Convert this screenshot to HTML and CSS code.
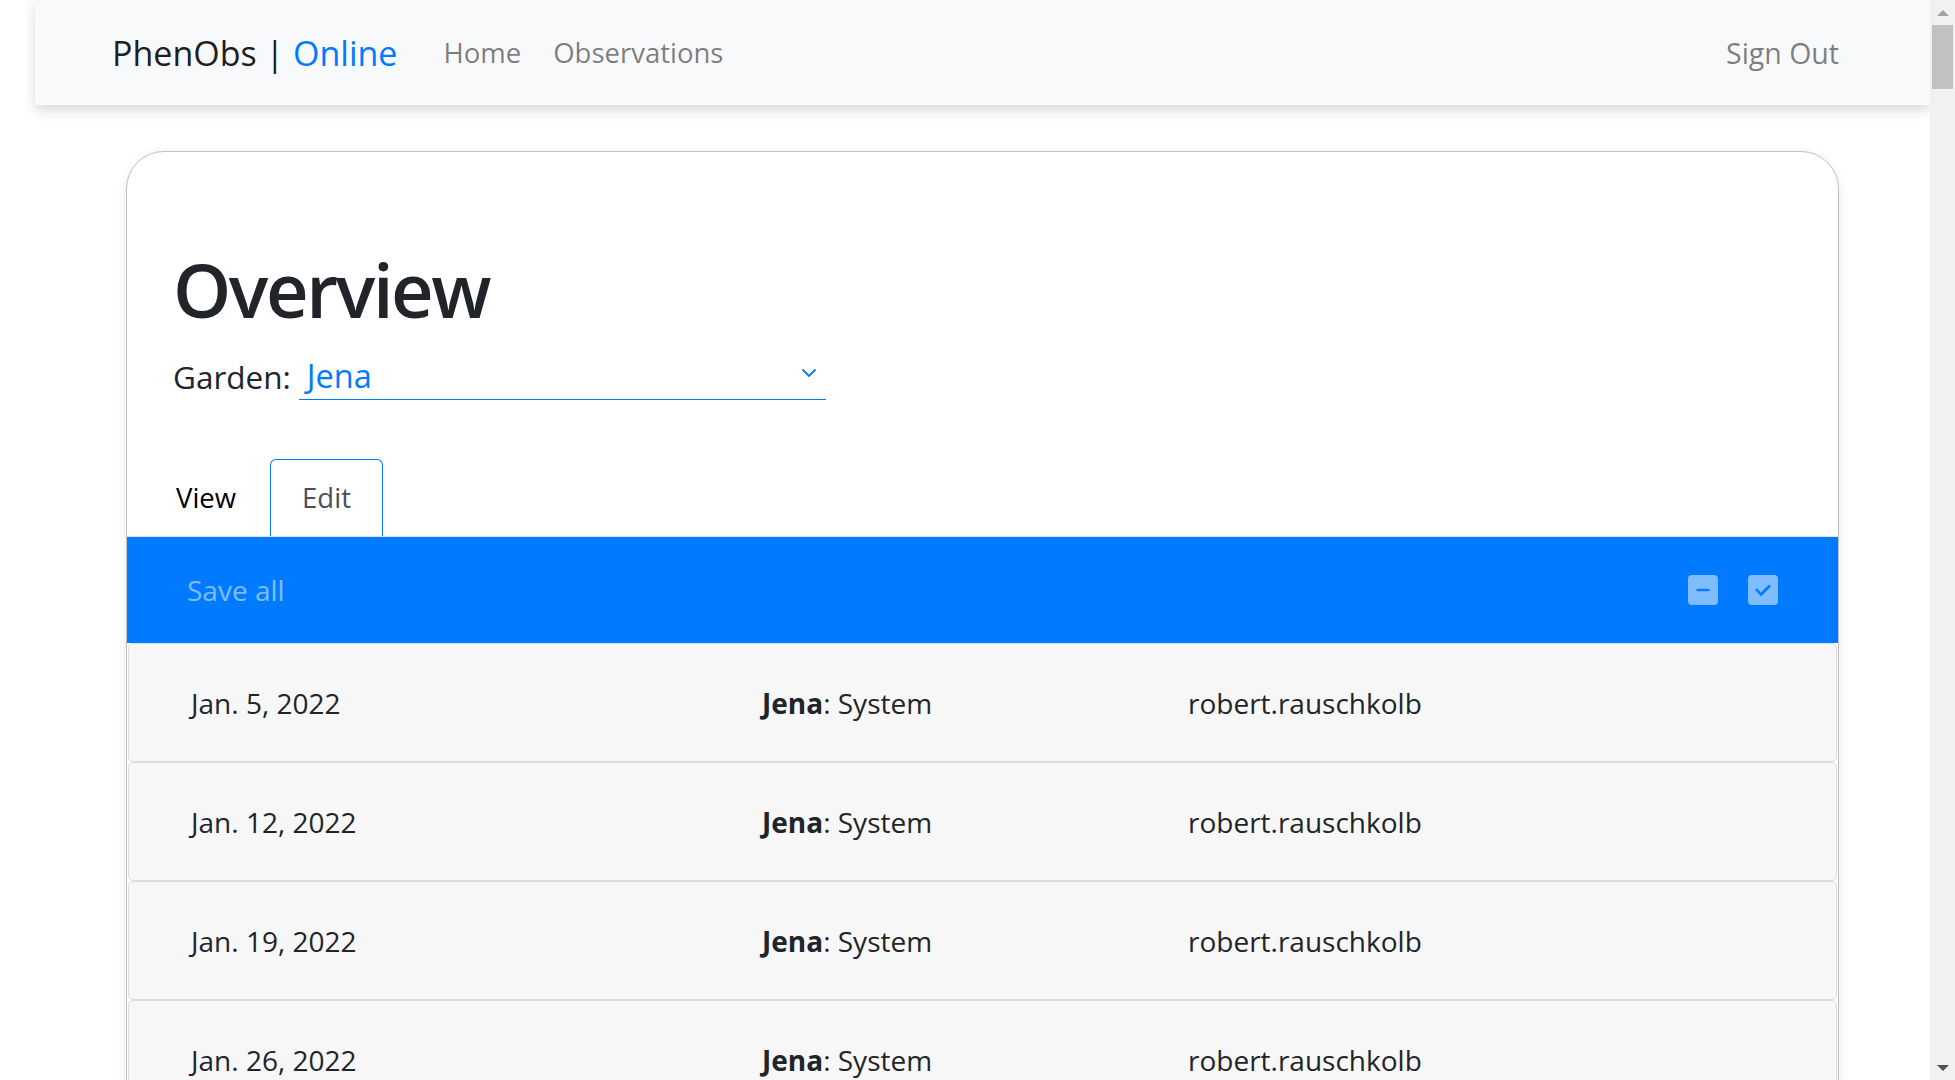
FILE: index.html
```html
<!DOCTYPE html>
<html lang="en">
<head>
<meta charset="utf-8">
<title>PhenObs | Online</title>
<link rel="stylesheet" href="styles.css">
</head>
<body>
<div class="viewport">
  <div class="page">
    <nav class="navbar">
      <a class="brand">PhenObs | <span class="brand-accent">Online</span></a>
      <a class="nav-link">Home</a>
      <a class="nav-link">Observations</a>
      <span class="nav-spacer"></span>
      <a class="nav-link nav-signout">Sign Out</a>
    </nav>
    <main class="main">
      <section class="card">
        <div class="card-head">
          <h1 class="title">Overview</h1>
          <div class="garden">
            <span class="garden-label">Garden:</span>
            <div class="select">
              <span class="select-value">Jena</span>
              <svg class="chevron" width="16" height="10" viewBox="0 0 16 10"><polyline points="1.5,1.5 8,8 14.5,1.5" fill="none" stroke="#007bff" stroke-width="1.8"/></svg>
            </div>
          </div>
        </div>
        <ul class="tabs">
          <li class="tab">View</li>
          <li class="tab tab-active">Edit</li>
        </ul>
        <div class="toolbar">
          <span class="save-all">Save all</span>
          <div class="tool-icons">
            <span class="tool-box">
              <svg width="30" height="30" viewBox="0 0 30 30"><line x1="8.5" y1="15" x2="21.5" y2="15" stroke="#007bff" stroke-width="2.4"/></svg>
            </span>
            <span class="tool-box">
              <svg width="30" height="30" viewBox="0 0 30 30"><polyline points="8,14 13,19.5 22,10.5" fill="none" stroke="#007bff" stroke-width="2.6"/></svg>
            </span>
          </div>
        </div>
        <div class="rows">
          <div class="row"><span>Jan. 5, 2022</span><span><b>Jena</b>: System</span><span>robert.rauschkolb</span></div>
          <div class="row"><span>Jan. 12, 2022</span><span><b>Jena</b>: System</span><span>robert.rauschkolb</span></div>
          <div class="row"><span>Jan. 19, 2022</span><span><b>Jena</b>: System</span><span>robert.rauschkolb</span></div>
          <div class="row"><span>Jan. 26, 2022</span><span><b>Jena</b>: System</span><span>robert.rauschkolb</span></div>
        </div>
      </section>
    </main>
  </div>
  <div class="scrollbar">
    <div class="sb-btn"><span class="sb-up"></span></div>
    <div class="sb-thumb"></div>
    <div class="sb-track"></div>
    <div class="sb-btn"><span class="sb-down"></span></div>
  </div>
</div>
</body>
</html>
```
FILE: styles.css
```css
* { box-sizing: border-box; }
html, body { margin: 0; padding: 0; height: 100%; overflow: hidden; background: #fff; }
body { font-family: "Open Sans", "Noto Sans", sans-serif; color: #212529; font-size: 28px; }

.viewport { display: flex; height: 100vh; }
.page { flex: 1; padding-left: 35px; display: flex; flex-direction: column; overflow: hidden; }

.navbar {
  position: relative; z-index: 2;
  height: 105px; flex: none;
  background: #f8f9fa;
  display: flex; align-items: center;
  padding: 0 75px 0 77px;
  box-shadow: 0 5px 12px rgba(0,0,0,0.16);
}
.brand { font-size: 34px; color: rgba(0,0,0,0.9); margin-right: 30px; white-space: nowrap; }
.brand-accent { color: #007bff; }
.nav-link { font-size: 27.5px; color: rgba(0,0,0,0.5); padding: 0 16px; }
.nav-signout { font-size: 28.5px; }
.nav-spacer { flex: 1; }

.main { flex: 1; padding: 46px 91px 0; }

.card {
  border: 1px solid #c2c2c2;
  border-radius: 38px 38px 0 0;
  box-shadow: 0 2px 10px rgba(0,0,0,0.10);
  background: #fff;
  min-height: 1000px;
}
.card-head { padding: 92px 0 0 46px; }
.title { margin: 0; font-size: 74px; line-height: 91px; font-weight: 600; letter-spacing: -2.4px; color: #212529; }
.garden { margin-top: 17px; display: flex; align-items: flex-end; font-size: 31.5px; }
.garden-label { line-height: 47px; margin-right: 8px; color: #212529; }
.select {
  width: 527px; height: 48px;
  border-bottom: 1px solid #007bff;
  display: flex; align-items: center; justify-content: space-between;
  padding: 0 9px 0 8px;
}
.select-value { color: #007bff; line-height: 47px; font-size: 32.5px; }
.chevron { margin-top: -6px; }

.tabs {
  list-style: none; margin: 59px 0 0; padding: 0 0 0 15px;
  display: flex; border-bottom: 1px solid #dee2e6;
  font-size: 27.5px;
}
.tab {
  padding: 17px 31px 18px; line-height: 41px;
  border: 1px solid transparent; border-bottom: 0;
  border-radius: 6px 6px 0 0;
  color: #000;
}
.tab:first-child { padding-left: 33px; padding-right: 33px; }
.tab-active { border-color: #007bff; color: #495057; }

.toolbar {
  height: 106px; background: #007bff;
  display: flex; align-items: center; justify-content: space-between;
  padding: 0 60px;
}
.save-all { color: rgba(255,255,255,0.5); }
.tool-icons { display: flex; gap: 30px; }
.tool-box { width: 30px; height: 30px; border-radius: 4px; background: rgba(255,255,255,0.5); display: block; }
.tool-box svg { display: block; }

.row {
  height: 119px; margin: 0 1px;
  border: 1px solid #dcdcdc; border-radius: 5px;
  background: #f7f7f7;
  display: grid; grid-template-columns: 571px 426px 1fr; align-items: center;
  padding-left: 62px;
  color: #212529;
}
.row b { font-weight: 700; }

.scrollbar { width: 25px; flex: none; background: #f1f1f1; display: flex; flex-direction: column; }
.sb-btn { height: 25px; display: flex; align-items: center; justify-content: center; flex: none; }
.sb-up { width: 0; height: 0; border-left: 6px solid transparent; border-right: 6px solid transparent; border-bottom: 6px solid #a3a3a3; }
.sb-down { width: 0; height: 0; border-left: 6px solid transparent; border-right: 6px solid transparent; border-top: 6px solid #505050; }
.sb-thumb { height: 64px; margin: 0 2px; background: #c1c1c1; flex: none; }
.sb-track { flex: 1; }
```
